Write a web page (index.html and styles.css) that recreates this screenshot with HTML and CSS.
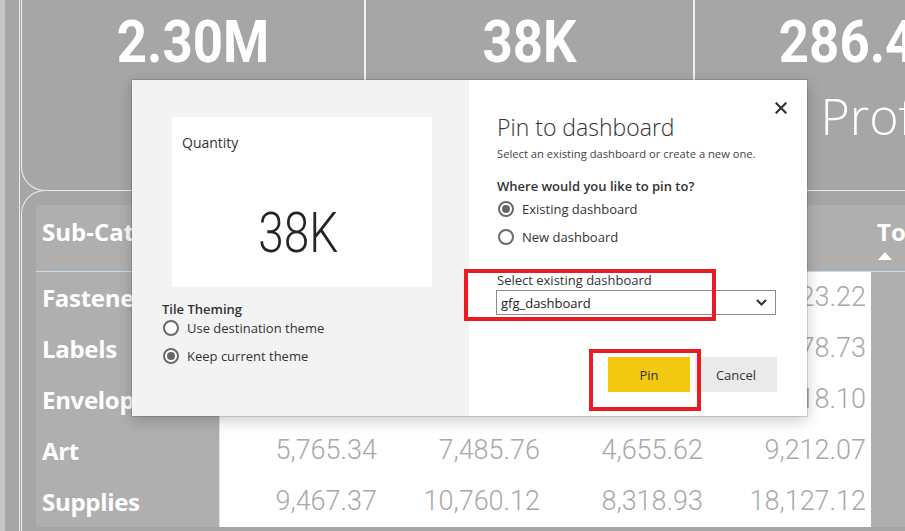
FILE: index.html
```html
<!DOCTYPE html>
<html lang="en">
<head>
<meta charset="utf-8">
<title>Pin to dashboard</title>
<link rel="stylesheet" href="styles.css">
</head>
<body>
<div class="page">
  <div class="edge"></div>
  <div class="rail"></div>
  <div class="canvas">
    <div class="kpis">
      <div class="kpi kpi-sales"><div class="kpi-value">2.30M</div><div class="kpi-label">Sales</div></div>
      <div class="kpi kpi-qty"><div class="kpi-value">38K</div><div class="kpi-label">Quantity</div></div>
      <div class="kpi kpi-profit"><div class="kpi-value">286.40K</div><div class="kpi-label">Profit</div></div>
    </div>
    <div class="report">
      <div class="matrix">
        <div class="th">Sub-Category</div>
        <div class="th th-left">Central</div>
        <div class="th th-left">East</div>
        <div class="th th-left">South</div>
        <div class="th th-left">West</div>
        <div class="th">Total<div class="sort"></div></div>

        <div class="rh">Fasteners</div>
        <div class="td td-first">1,024.56</div>
        <div class="td">1,203.84</div>
        <div class="td">812.40</div>
        <div class="td">3,023.22</div>
        <div class="tt">6,064.02</div>

        <div class="rh">Labels</div>
        <div class="td td-first">2,451.11</div>
        <div class="td">2,880.45</div>
        <div class="td">1,903.62</div>
        <div class="td">5,078.73</div>
        <div class="tt">12,313.91</div>

        <div class="rh">Envelopes</div>
        <div class="td td-first">4,636.87</div>
        <div class="td">4,375.87</div>
        <div class="td">3,345.56</div>
        <div class="td">4,118.10</div>
        <div class="tt">16,476.40</div>

        <div class="rh">Art</div>
        <div class="td td-first">5,765.34</div>
        <div class="td">7,485.76</div>
        <div class="td">4,655.62</div>
        <div class="td">9,212.07</div>
        <div class="tt">27,118.79</div>

        <div class="rh">Supplies</div>
        <div class="td td-first">9,467.37</div>
        <div class="td">10,760.12</div>
        <div class="td">8,318.93</div>
        <div class="td">18,127.12</div>
        <div class="tt">46,673.54</div>
      </div>
    </div>
  </div>
</div>

<div class="dialog">
  <div class="dlg-preview">
    <div class="tile">
      <div class="tile-title">Quantity</div>
      <div class="tile-value">38K</div>
    </div>
    <div class="theming">Tile Theming</div>
    <div class="options options-left">
      <label class="opt"><span class="radio"></span><span>Use destination theme</span></label>
      <label class="opt"><span class="radio radio-on"></span><span>Keep current theme</span></label>
    </div>
  </div>
  <div class="dlg-form">
    <button class="close" aria-label="Close">
      <svg width="12" height="12" viewBox="0 0 12 12"><path d="M1.5 1.5 L10.5 10.5 M10.5 1.5 L1.5 10.5" stroke="#333" stroke-width="2.2" stroke-linecap="square" fill="none"/></svg>
    </button>
    <div class="form-title">Pin to dashboard</div>
    <div class="form-sub">Select an existing dashboard or create a new one.</div>
    <div class="form-q">Where would you like to pin to?</div>
    <div class="options options-right">
      <label class="opt"><span class="radio radio-on"></span><span>Existing dashboard</span></label>
      <label class="opt"><span class="radio"></span><span>New dashboard</span></label>
    </div>
    <div class="field-label">Select existing dashboard</div>
    <div class="select">
      <span>gfg_dashboard</span>
      <svg width="11" height="7" viewBox="0 0 11 7"><path d="M1 1 L5.5 5.5 L10 1" stroke="#333" stroke-width="2" fill="none"/></svg>
    </div>
    <div class="actions">
      <button class="btn btn-primary">Pin</button>
      <button class="btn btn-secondary">Cancel</button>
    </div>
  </div>
  <div class="mark mark-select"></div>
  <div class="mark mark-pin"></div>
</div>
</body>
</html>
```

FILE: styles.css
```css
* { box-sizing: border-box; }

html, body {
  margin: 0;
  padding: 0;
}

body {
  width: 905px;
  height: 531px;
  overflow: hidden;
  background: #a6a6a6;
  font-family: "Open Sans", "Noto Sans", sans-serif;
  position: relative;
}

.page {
  display: flex;
  height: 531px;
}

.edge {
  width: 5px;
  flex: none;
  background: #c6c6c6;
}

.rail {
  width: 1px;
  flex: none;
  margin-left: 14px;
  background: #ececec;
}

.canvas {
  flex: 1;
  min-width: 0;
  margin-left: 1px;
  display: flex;
  flex-direction: column;
}

/* KPI cards */
.kpis {
  display: flex;
  height: 191px;
  flex: none;
  border-left: 1px solid #ececec;
  border-bottom: 1px solid #ececec;
  border-bottom-left-radius: 24px;
}

.kpi {
  flex: none;
  text-align: center;
  color: #fff;
  padding-top: 12px;
}

.kpi-sales { width: 344px; border-right: 2px solid #f2f2f2; }
.kpi-qty   { width: 329px; border-right: 2px solid #f2f2f2; }
.kpi-profit { width: 368px; }

.kpi-value {
  font-family: "Roboto", sans-serif;
  font-weight: 700;
  font-size: 60px;
  line-height: 60px;
  transform: scaleX(0.88);
}

.kpi-label {
  margin-top: 14px;
  font-family: "Open Sans", sans-serif;
  font-weight: 300;
  font-size: 50px;
  line-height: 60px;
  padding-left: 4px;
}

/* Report / matrix */
.report {
  flex: 1;
  margin-top: -1px;
  border-left: 1px solid #ececec;
  border-top: 1px solid #ececec;
  border-top-left-radius: 24px;
  padding: 14px 0 0 14px;
}

.matrix {
  display: grid;
  grid-template-columns: 183px repeat(4, 163px) 180px;
  grid-template-rows: 67px;
  grid-auto-rows: 51px;
}

.th {
  background: #afafaf;
  border-bottom: 1px solid #c6dcf0;
  color: #fff;
  font-weight: 700;
  font-size: 24px;
  line-height: 28px;
  padding: 13px 6px 0;
  white-space: nowrap;
  overflow: hidden;
}

.sort {
  width: 0;
  height: 0;
  margin: 6px 0 0 1px;
  border-left: 7.5px solid transparent;
  border-right: 7.5px solid transparent;
  border-bottom: 8px solid #fff;
}

.rh {
  background: #afafaf;
  color: #fff;
  font-weight: 700;
  font-size: 24px;
  line-height: 51px;
  padding-left: 6px;
  white-space: nowrap;
  overflow: hidden;
  letter-spacing: -0.3px;
}

.td {
  background: #fff;
  color: #a9a9a9;
  font-family: "Roboto", sans-serif;
  font-weight: 300;
  font-size: 27px;
  line-height: 51px;
  text-align: right;
  padding-right: 5px;
}

.td-first { box-shadow: inset 1px 0 #d3e3f1; }

.tt {
  background: #afafaf;
  color: #fff;
  font-family: "Roboto", sans-serif;
  font-weight: 300;
  font-size: 27px;
  line-height: 51px;
  text-align: right;
  padding-right: 5px;
}

/* Dialog */
.dialog {
  position: absolute;
  left: 132px;
  top: 80px;
  width: 675px;
  height: 336px;
  display: flex;
  background: #fff;
  box-shadow: 0 0 0 1px rgba(0, 0, 0, 0.12), 0 4px 14px rgba(0, 0, 0, 0.22);
  color: #333;
}

.dlg-preview {
  width: 337px;
  flex: none;
  background: #f3f3f3;
  padding: 37px 0 0 30px;
}

.tile {
  width: 260px;
  height: 170px;
  margin-left: 10px;
  background: #fff;
  padding: 16px 10px 0;
}

.tile-title {
  font-size: 14px;
  line-height: 20px;
  color: #333;
}

.tile-value {
  margin-top: 52px;
  font-family: "Roboto", sans-serif;
  font-weight: 300;
  font-size: 56px;
  line-height: 56px;
  color: #252525;
  text-align: center;
  padding-right: 9px;
  transform: scaleX(0.82);
}

.theming {
  margin-top: 13px;
  font-weight: 600;
  font-size: 13px;
  line-height: 18px;
  color: #333;
}

.options {
  display: flex;
  flex-direction: column;
}

.options-left { gap: 8px; }
.options-left .opt { height: 20px; }

.opt {
  display: flex;
  align-items: center;
  gap: 8px;
  font-size: 13px;
  color: #333;
  padding-left: 1px;
}

.radio {
  width: 16px;
  height: 16px;
  flex: none;
  border: 2px solid #6a6a6a;
  border-radius: 50%;
  background: #fff;
  display: flex;
  align-items: center;
  justify-content: center;
}

.radio-on::after {
  content: "";
  width: 8px;
  height: 8px;
  border-radius: 50%;
  background: #666;
}

.dlg-form {
  flex: 1;
  position: relative;
  padding: 33px 30px 0 28px;
}

.close {
  position: absolute;
  top: 22px;
  right: 20px;
  width: 12px;
  height: 12px;
  padding: 0;
  border: 0;
  background: none;
  display: block;
}

.close svg { display: block; }

.form-title {
  font-weight: 300;
  font-size: 23px;
  line-height: 28px;
  color: #333;
}

.form-sub {
  margin-top: 5px;
  font-size: 11.2px;
  line-height: 16px;
  color: #444;
}

.form-q {
  margin-top: 15px;
  font-weight: 600;
  font-size: 13px;
  line-height: 18px;
  color: #333;
}

.options-right {
  margin-top: 2px;
  gap: 4px;
}

.options-right .opt { height: 24px; }

.field-label {
  margin-top: 22px;
  font-size: 13px;
  line-height: 18px;
  color: #333;
}

.select {
  margin: 1px 0 0 -1px;
  width: 280px;
  height: 25px;
  border: 1px solid #8a8a8a;
  background: #fff;
  display: flex;
  align-items: center;
  justify-content: space-between;
  padding: 0 8px 0 4px;
  font-size: 13px;
  color: #222;
}

.actions {
  margin-top: 42px;
  display: flex;
  justify-content: flex-end;
  gap: 5px;
}

.btn {
  width: 82px;
  height: 35px;
  border: 0;
  font-family: "Open Sans", sans-serif;
  font-size: 13px;
  color: #333;
  padding: 0;
}

.btn-primary { background: #f2c811; }
.btn-secondary { background: #eaeaea; }

.mark {
  position: absolute;
  border: 4px solid #e81c24;
}

.mark-select { left: 332px; top: 189px; width: 252px; height: 52px; }
.mark-pin { left: 457px; top: 269px; width: 112px; height: 62px; }
```
